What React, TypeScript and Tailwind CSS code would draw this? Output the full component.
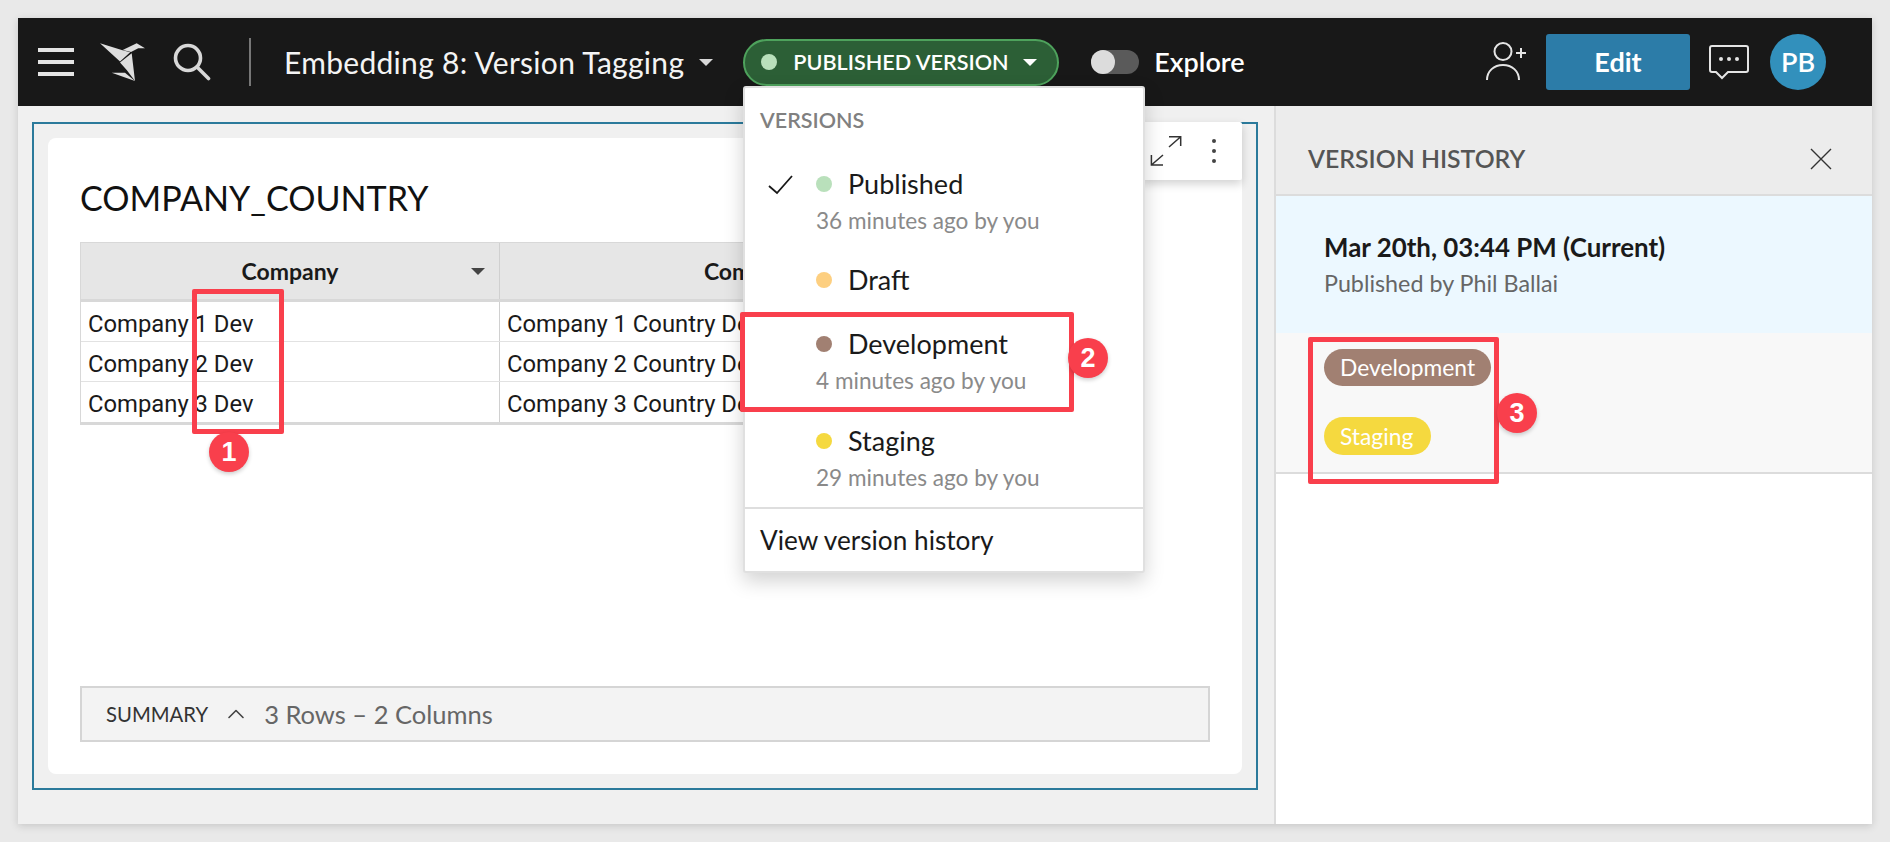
import { ChevronUp } from 'lucide-react';

const versions = [
  { name: 'Published', time: '36 minutes ago by you', dot: 'bg-[#b9e0bb]', checked: true, row: 'h-[96px]' },
  { name: 'Draft', time: '', dot: 'bg-[#fdcf80]', checked: false, row: 'h-[64px]' },
  { name: 'Development', time: '4 minutes ago by you', dot: 'bg-[#a18072]', checked: false, row: 'h-[97px]' },
  { name: 'Staging', time: '29 minutes ago by you', dot: 'bg-[#f5d93f]', checked: false, row: 'h-[86px]' },
];

const rows = ['1', '2', '3'];

function Caret({ className }: { className: string }) {
  return <span className={`inline-block w-0 h-0 border-x-[7px] border-x-transparent border-t-[7px] ${className}`} />;
}

function Logo() {
  return (
    <svg width="45" height="38" viewBox="0 0 45 38" fill="#dedede">
      <polygon points="0,0.3 21.7,7 30.2,9.3 20,18.5" />
      <polygon points="31.7,10.3 20,19.5 26.7,27 35,38" />
      <polygon points="22.7,7 36.7,0.3 45,5.3 38.3,5.3 31,9" />
      <polygon points="11.7,29.7 25,29.7 35,38" />
    </svg>
  );
}

function SearchIcon() {
  return (
    <svg width="38" height="38" viewBox="0 0 38 38" fill="none" stroke="#d8d8d8" strokeWidth="3.6" strokeLinecap="round">
      <circle cx="15" cy="15" r="12.5" />
      <path d="M24 24l11.5 11.5" />
    </svg>
  );
}

function AddUser() {
  return (
    <svg width="42" height="40" viewBox="0 0 42 40" fill="none" stroke="#e4e4e4" strokeWidth="2">
      <circle cx="18" cy="9.5" r="8.5" />
      <path d="M2 38c0-9 7-15 16-15s16 6 16 15" />
      <path d="M31 11h10M36 6v10" />
    </svg>
  );
}

function Comment() {
  return (
    <svg width="40" height="36" viewBox="0 0 40 36" fill="none" stroke="#e4e4e4" strokeWidth="2">
      <path d="M3 1h34a2 2 0 0 1 2 2v22a2 2 0 0 1-2 2H19l-6 6-6-6H3a2 2 0 0 1-2-2V3a2 2 0 0 1 2-2z" />
      <circle cx="12" cy="14" r="2" fill="#e4e4e4" stroke="none" />
      <circle cx="20" cy="14" r="2" fill="#e4e4e4" stroke="none" />
      <circle cx="28" cy="14" r="2" fill="#e4e4e4" stroke="none" />
    </svg>
  );
}

function Marker({ n, className }: { n: string; className: string }) {
  return (
    <div
      className={`absolute w-[40px] h-[40px] rounded-full bg-[#f93f4c] text-white flex items-center justify-center text-[27px] font-bold font-['Liberation_Sans',sans-serif] shadow-[0_2px_4px_rgba(0,0,0,0.2)] ${className}`}
    >
      {n}
    </div>
  );
}

function Header() {
  return (
    <header className="h-[88px] shrink-0 bg-[#181818] flex items-center text-white">
      <div className="ml-[20px] w-[36px] flex flex-col gap-[8px]">
        <div className="h-[4px] bg-[#e4e4e4]" />
        <div className="h-[4px] bg-[#e4e4e4]" />
        <div className="h-[4px] bg-[#e4e4e4]" />
      </div>
      <div className="ml-[26px] -mt-[1px]">
        <Logo />
      </div>
      <div className="ml-[28px] -mt-[1px]">
        <SearchIcon />
      </div>
      <div className="ml-[38px] w-[2px] h-[48px] bg-[#777]" />
      <span className="ml-[33px] text-[30px] tracking-[0.3px] text-[#f4f4f4]">Embedding 8: Version Tagging</span>
      <Caret className="ml-[15px] border-t-[#d8d8d8]" />
      <div className="ml-[30px] h-[47px] w-[316px] rounded-full bg-[#2c5f36] border-2 border-[#4ea25c] flex items-center pl-[16px]">
        <span className="w-[16px] h-[16px] rounded-full bg-[#b9e0bb]" />
        <span className="ml-[16px] text-[21.6px] font-semibold">PUBLISHED VERSION</span>
        <Caret className="ml-[14px] border-t-white" />
      </div>
      <div className="ml-[32px] w-[48px] h-[24px] rounded-full bg-[#5a5a5a]">
        <div className="w-[24px] h-[24px] rounded-full bg-[#dcdcdc]" />
      </div>
      <span className="ml-[15px] text-[27px] font-semibold">Explore</span>
      <div className="ml-auto flex items-center mr-[46px]">
        <AddUser />
        <button className="ml-[19px] w-[144px] h-[56px] rounded-[3px] bg-[#2c7ca8] text-[27px] font-bold">Edit</button>
        <div className="ml-[19px] mt-[1px]">
          <Comment />
        </div>
        <div className="ml-[21px] w-[56px] h-[56px] rounded-full bg-[#3290bc] flex items-center justify-center text-[27px] font-semibold">
          PB
        </div>
      </div>
    </header>
  );
}

function VersionMenu() {
  return (
    <div className="absolute left-[725px] top-[68px] w-[402px] h-[487px] z-10 bg-white border-2 border-[#e0e0e0] rounded-[3px] shadow-[0_8px_20px_rgba(0,0,0,0.18)] flex flex-col">
      <div className="pl-[15px] pt-[16px] h-[76px] shrink-0 text-[21.5px] font-semibold text-[#808080]">VERSIONS</div>
      {versions.map((v) => (
        <div key={v.name} className={`flex pl-[23px] shrink-0 ${v.row}`}>
          <div className="w-[48px] pt-[11px]">
            {v.checked && (
              <svg width="26" height="20" viewBox="0 0 26 20" fill="none" stroke="#181818" strokeWidth="1.8">
                <path d="M1 11l8 7L24 1" />
              </svg>
            )}
          </div>
          <div>
            <div className="flex items-center h-[40px]">
              <span className={`w-[16px] h-[16px] rounded-full ${v.dot}`} />
              <span className="ml-[16px] text-[27px] text-[#1a1a1a]">{v.name}</span>
            </div>
            {v.time && <div className="text-[22.6px] leading-[33px] text-[#8a8a8a]">{v.time}</div>}
          </div>
        </div>
      ))}
      <div className="border-t-2 border-[#dedede] flex-1 pl-[15px] pt-[2px] flex items-center text-[26.2px] text-[#1a1a1a]">
        View version history
      </div>
    </div>
  );
}

function Widget() {
  return (
    <section className="flex-1 relative border-2 border-[#2b7a9b] p-[14px] flex">
      <div className="flex-1 rounded-[8px] bg-white px-[32px] pt-[36px] pb-[32px] flex flex-col">
        <h1 className="text-[34.1px] leading-[48px] mb-[2px] text-[#111]">COMPANY_COUNTRY</h1>
        <div className="mt-[18px] w-[1014px] border border-b-[3px] border-[#d8d8d8] font-['Roboto',sans-serif] text-[23.8px] text-[#1a1a1a]">
          <div className="flex h-[59px] bg-[#e6e6e6] border-b-[3px] border-[#d8d8d8] font-['Lato',sans-serif] font-bold text-[23px]">
            <div className="w-[419px] shrink-0 border-r border-[#d0d0d0] flex items-center justify-center relative">
              Company
              <Caret className="absolute right-[14px] top-[25px] border-t-[#444]" />
            </div>
            <div className="flex-1 flex items-center justify-center">Company Country</div>
          </div>
          {rows.map((n, i) => (
            <div key={n} className={`flex h-[40px] ${i < 2 ? 'border-b border-[#e2e2e2]' : ''}`}>
              <div className="w-[419px] shrink-0 border-r border-[#d0d0d0] pl-[7px] pt-[6px] flex items-center">Company {n} Dev</div>
              <div className="flex-1 pl-[7px] pt-[6px] flex items-center">Company {n} Country Dev</div>
            </div>
          ))}
        </div>
        <div className="mt-auto h-[56px] border-2 border-[#d5d5d5] bg-[#f3f3f3] flex items-center pl-[24px]">
          <span className="text-[20.3px] text-[#333]">SUMMARY</span>
          <ChevronUp className="ml-[14px] text-[#444]" size={28} strokeWidth={1.4} />
          <span className="ml-[14px] text-[25.5px] text-[#666]">3 Rows – 2 Columns</span>
        </div>
      </div>
      <div className="absolute right-[14px] -top-[2px] h-[58px] w-[100px] bg-white rounded-[2px] shadow-[0_4px_10px_rgba(0,0,0,0.18)] flex items-center justify-end">
        <svg width="32" height="32" viewBox="0 0 32 32" fill="none" stroke="#333" strokeWidth="1.5" className="mr-[30px]">
          <path d="M19 12L30.7 1.7M19 1.7h11.7V11M13 20L1.4 30M1.4 20v10H13" />
        </svg>
        <div className="flex flex-col gap-[6px] mr-[26px]">
          <span className="w-[4px] h-[4px] rounded-full bg-[#444]" />
          <span className="w-[4px] h-[4px] rounded-full bg-[#444]" />
          <span className="w-[4px] h-[4px] rounded-full bg-[#444]" />
        </div>
      </div>
    </section>
  );
}

function VersionHistory() {
  return (
    <aside className="w-[598px] shrink-0 bg-white border-l-2 border-[#dcdcdc] flex flex-col">
      <div className="h-[90px] bg-[#ececec] border-b-2 border-[#dcdcdc] flex items-center justify-between pl-[32px] pr-[40px] pt-[18px]">
        <span className="text-[24.8px] font-semibold text-[#555]">VERSION HISTORY</span>
        <svg width="22" height="22" viewBox="0 0 22 22" fill="none" stroke="#333" strokeWidth="1.4">
          <path d="M1 1l20 20M21 1L1 21" />
        </svg>
      </div>
      <div className="h-[137px] bg-[#ecf8ff] pl-[48px] pt-[33px]">
        <div className="text-[25.9px] font-bold text-[#1a1a1a] leading-[36px]">Mar 20th, 03:44 PM (Current)</div>
        <div className="text-[23.3px] text-[#666] leading-[36px]">Published by Phil Ballai</div>
      </div>
      <div className="h-[141px] bg-[#f8f8f8] border-b-2 border-[#dcdcdc] pl-[48px] pt-[16px] flex flex-col items-start gap-[31px]">
        <span className="h-[37px] rounded-full bg-[#a18072] text-white text-[22.8px] px-[16px] flex items-center">Development</span>
        <span className="h-[38px] rounded-full bg-[#f5d93f] text-white text-[22.8px] pl-[16px] pr-[18px] flex items-center">Staging</span>
      </div>
    </aside>
  );
}

export default function App() {
  return (
    <div className="h-[842px] bg-[#e9e9e9] p-[18px] font-['Lato',sans-serif] overflow-hidden">
      <div className="relative h-[806px] bg-[#f0f0f0] shadow-[0_2px_8px_rgba(0,0,0,0.15)] flex flex-col">
        <Header />
        <div className="flex-1 flex min-h-0">
          <div className="flex-1 pl-[14px] pr-[16px] pt-[16px] pb-[34px] flex">
            <Widget />
          </div>
          <VersionHistory />
        </div>
        <VersionMenu />

        <div className="absolute z-20 left-[174px] top-[271px] w-[92px] h-[145px] border-[5px] border-[#f93f4c] rounded-[2px]" />
        <Marker n="1" className="z-20 left-[191px] top-[414px]" />
        <div className="absolute z-20 left-[722px] top-[294px] w-[334px] h-[100px] border-[5px] border-[#f93f4c] rounded-[2px]" />
        <Marker n="2" className="z-20 left-[1050px] top-[320px]" />
        <div className="absolute z-20 left-[1290px] top-[319px] w-[191px] h-[147px] border-[5px] border-[#f93f4c] rounded-[2px]" />
        <Marker n="3" className="z-20 left-[1479px] top-[375px]" />
      </div>
    </div>
  );
}
